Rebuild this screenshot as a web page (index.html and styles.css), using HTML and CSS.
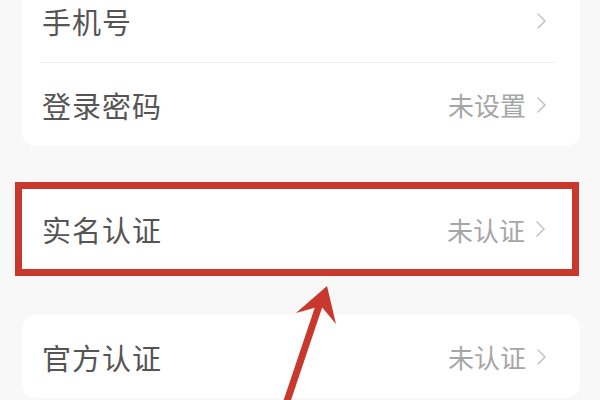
FILE: index.html
```html
<!DOCTYPE html>
<html lang="zh-CN">
<head>
<meta charset="utf-8">
<title>账号与安全</title>
<link rel="stylesheet" href="styles.css">
</head>
<body>
<div class="page">
  <div class="card card-top">
    <div class="row">
      <span class="label">手机号</span>
      <span class="value"><svg class="chev" viewBox="0 0 12 18" width="12" height="18"><path d="M2 2 L9 9 L2 16" /></svg></span>
    </div>
    <div class="divider"></div>
    <div class="row">
      <span class="label">登录密码</span>
      <span class="value">未设置<svg class="chev" viewBox="0 0 12 18" width="12" height="18"><path d="M2 2 L9 9 L2 16" /></svg></span>
    </div>
  </div>

  <div class="highlight">
    <div class="card">
      <div class="row row-short">
        <span class="label">实名认证</span>
        <span class="value">未认证<svg class="chev" viewBox="0 0 12 18" width="12" height="18"><path d="M2 2 L9 9 L2 16" /></svg></span>
      </div>
    </div>
  </div>

  <div class="card card-bottom">
    <div class="row">
      <span class="label">官方认证</span>
      <span class="value">未认证<svg class="chev" viewBox="0 0 12 18" width="12" height="18"><path d="M2 2 L9 9 L2 16" /></svg></span>
    </div>
  </div>

  <svg class="arrow" viewBox="0 0 600 400" width="600" height="400">
    <line x1="320" y1="303" x2="286" y2="404" />
    <polygon points="327,286 336,324 321,306 296,313" />
  </svg>
</div>
</body>
</html>
```

FILE: styles.css
```css
html, body {
  margin: 0;
  padding: 0;
  background: #f8f8f8;
}

.page {
  position: relative;
  width: 600px;
  height: 400px;
  overflow: hidden;
  box-sizing: border-box;
  padding: 0 20px 0 22px;
  display: flex;
  flex-direction: column;
  font-family: "Noto Sans CJK SC", "Noto Sans", sans-serif;
}

.card {
  background: #ffffff;
  border-radius: 14px;
  flex: none;
}

.card-top {
  margin-top: -21px;
}

.card-bottom {
  margin-top: 39px;
}

.row {
  height: 83px;
  display: flex;
  align-items: center;
  justify-content: space-between;
  padding: 0 32px 0 20px;
}

.row-short {
  height: 80px;
  padding: 0 25px 0 20px;
}

.divider {
  height: 1px;
  background: #eeeeee;
  margin: 0 25px 0 18px;
}

.label {
  font-size: 29px;
  color: #555555;
  letter-spacing: 1px;
}

.value {
  display: flex;
  align-items: center;
  gap: 10px;
  font-size: 26px;
  color: #a6a6a6;
}

.chev {
  display: block;
  fill: none;
  stroke: #c4c4c4;
  stroke-width: 1.6;
  stroke-linecap: round;
  stroke-linejoin: round;
}

.highlight {
  margin: 36px 1px 0 -7px;
  border: 7px solid #c8382d;
  flex: none;
}

.highlight .card {
  border-radius: 0;
}

.arrow {
  position: absolute;
  left: 0;
  top: 0;
  pointer-events: none;
}

.arrow line {
  stroke: #c8382d;
  stroke-width: 7;
}

.arrow polygon {
  fill: #c8382d;
}
```
